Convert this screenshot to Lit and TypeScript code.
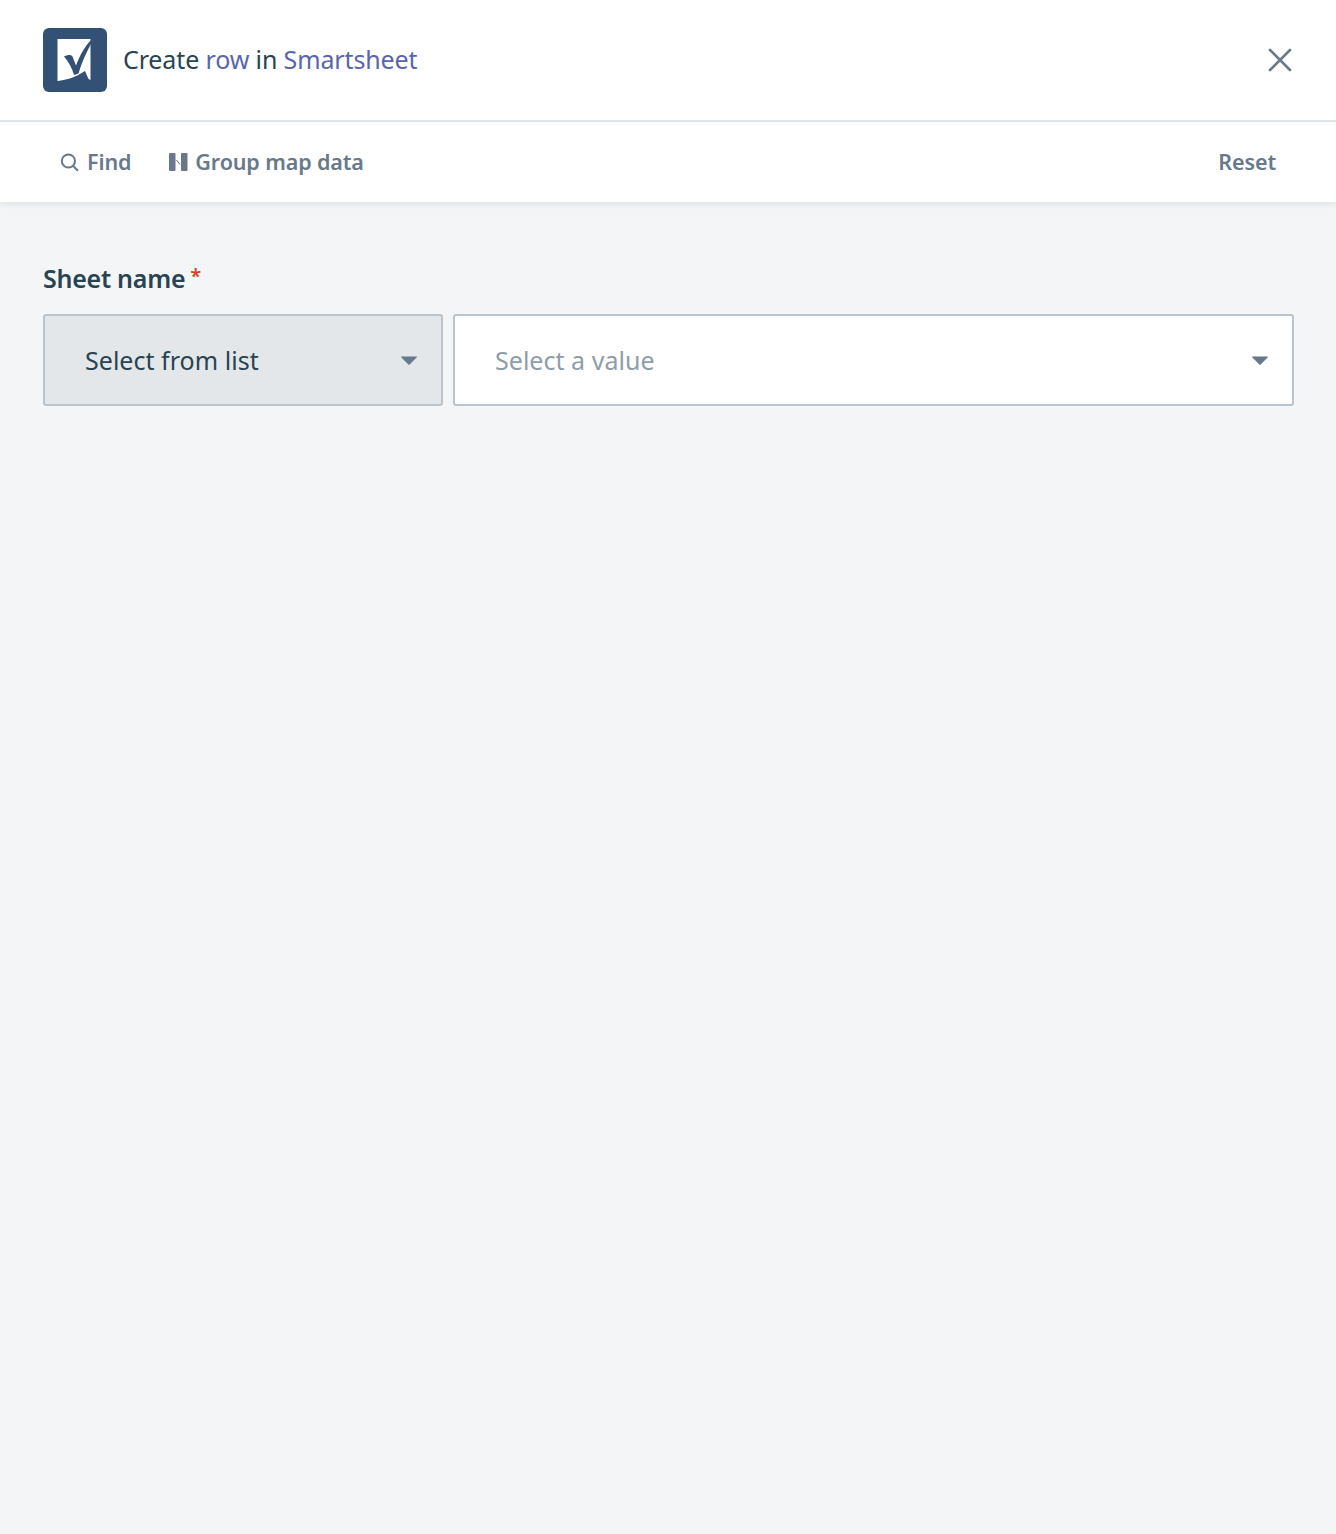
import { LitElement, html, css } from "lit"
import { customElement } from "lit/decorators.js"

@customElement("app-root")
export class AppRoot extends LitElement {
  static styles = css`
    :host {
      display: flex;
      flex-direction: column;
      height: 1534px;
      background: #f3f5f7;
      font-family: "Noto Sans", "Open Sans", sans-serif;
      color: #2a4351;
    }
    .header {
      height: 120px;
      display: flex;
      align-items: center;
      padding: 0 44px 0 43px;
      background: #fff;
      border-bottom: 2px solid #e4e8eb;
    }
    .logo {
      width: 64px;
      height: 64px;
      flex: none;
      display: block;
    }
    .title {
      margin-left: 16px;
      margin-bottom: 2px;
      font-size: 25px;
      letter-spacing: -0.13px;
      flex: 1;
    }
    .link {
      color: #5a65ad;
    }
    .close {
      width: 24px;
      height: 24px;
      display: block;
    }
    .toolbar {
      height: 80px;
      display: flex;
      align-items: center;
      padding: 0 60px 0 59px;
      background: #fff;
      box-shadow: 0 2px 6px rgba(38, 63, 76, 0.1);
      font-size: 21.5px;
      font-weight: 600;
      letter-spacing: -0.12px;
      color: #67798a;
      position: relative;
    }
    .tool {
      display: flex;
      align-items: center;
      gap: 8px;
    }
    .tool + .tool {
      margin-left: 37px;
    }
    .tool svg {
      width: 20px;
      height: 20px;
      display: block;
    }
    .txt {
      margin-bottom: 2px;
    }
    .group-txt {
      margin-left: -1px;
    }
    .reset {
      margin-left: auto;
    }
    .form {
      padding: 57px 42px 0 43px;
    }
    .label {
      display: flex;
      align-items: flex-start;
      height: 38px;
      font-size: 25px;
      line-height: 38px;
      font-weight: 600;
      letter-spacing: -0.25px;
    }
    .req {
      color: #d1432a;
      font-size: 20px;
      line-height: 34px;
      margin-left: 5px;
    }
    .fields {
      display: flex;
      gap: 10px;
      margin-top: 17px;
    }
    .select {
      height: 92px;
      box-sizing: border-box;
      display: flex;
      align-items: center;
      justify-content: space-between;
      padding: 0 24px 0 40px;
      border: 2px solid #b9c4cc;
      border-radius: 3px;
      font-size: 25px;
      letter-spacing: 0.03px;
    }
    .type {
      width: 400px;
      flex: none;
      background: #e3e7ea;
    }
    .value {
      flex: 1;
      background: #fff;
      color: #8d9ea8;
    }
    .caret {
      width: 16px;
      height: 9px;
      display: block;
    }
  `

  caret() {
    return html`<svg class="caret" viewBox="0 0 16 9"><path d="M0.5 0.5h15a.5.5 0 0 1 .35.85L8.6 8.6a.8.8 0 0 1-1.2 0L.15 1.35A.5.5 0 0 1 .5.5z" fill="#67798a"/></svg>`
  }

  render() {
    return html`
      <div class="header">
        <svg class="logo" viewBox="0 0 64 64">
          <rect width="64" height="64" rx="6" fill="#335075"/>
          <path d="M14.5 11 L47.5 11 L47.5 52 L45.5 51 L42 43 C33 49 24 52 14.5 53 Z" fill="#fff"/>
          <path d="M21 28.5 C25 26.5 28 26.5 29.5 28.5 L33 37.5 C37 27 42 18 49 11 L49 14 C43.5 24 38.5 35 35.5 45.5 L31 47 C29 40 25.5 33.5 21 28.5 Z" fill="#335075"/>
        </svg>
        <div class="title">Create <span class="link">row</span> in <span class="link">Smartsheet</span></div>
        <svg class="close" viewBox="0 0 24 24">
          <path d="M2 2 L22 22 M22 2 L2 22" stroke="#67798a" stroke-width="2.6" stroke-linecap="round" fill="none"/>
        </svg>
      </div>
      <div class="toolbar">
        <div class="tool">
          <svg viewBox="0 0 20 20">
            <circle cx="9.4" cy="9" r="6.6" stroke="#67798a" stroke-width="2" fill="none"/>
            <path d="M14.2 14 L18.4 18.2" stroke="#67798a" stroke-width="2" stroke-linecap="round"/>
          </svg>
          <span class="txt">Find</span>
        </div>
        <div class="tool">
          <svg viewBox="0 0 20 20">
            <rect x="1" y="1" width="6.5" height="18" rx="1" fill="#67798a"/>
            <rect x="13" y="1" width="6.5" height="18" rx="1" fill="#67798a"/>
            <path d="M8.5 8 L12 12.5" stroke="#67798a" stroke-width="1"/>
          </svg>
          <span class="txt group-txt">Group map data</span>
        </div>
        <div class="reset txt">Reset</div>
      </div>
      <div class="form">
        <div class="label">Sheet name<span class="req">*</span></div>
        <div class="fields">
          <div class="select type">Select from list ${this.caret()}</div>
          <div class="select value">Select a value ${this.caret()}</div>
        </div>
      </div>
    `
  }
}
